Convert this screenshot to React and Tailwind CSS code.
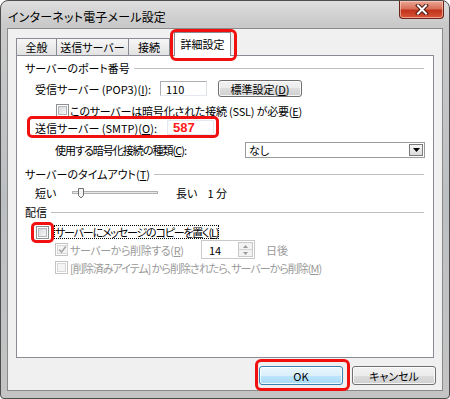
import React from 'react';

const U = ({ children }) => <span className="underline underline-offset-[1px]">{children}</span>;

function Check({ checked = false, disabled = false }) {
  return (
    <span className={disabled ? "w-[13px] h-[13px] shrink-0 border border-[#c4c4c4] bg-white p-[1px] flex" : "w-[13px] h-[13px] shrink-0 border border-[#8e8f8f] bg-white p-[1px] flex"}>
      <span className={disabled ? "flex-1 border border-[#d8d8d8] bg-[#f4f4f4] flex items-center justify-center" : "flex-1 border border-[#b3b6bb] bg-gradient-to-br from-[#d6d9de] to-[#f7f7f7] flex items-center justify-center"}>
        {checked && (
          <svg width="9" height="9" viewBox="0 0 9 9">
            <path d="M1.2 4.6 L3.6 7 L7.8 1.6" fill="none" stroke="#a8a8a8" strokeWidth="1.6" />
          </svg>
        )}
      </span>
    </span>
  );
}

function Btn({ children, def = false, className = "" }) {
  return (
    <div
      className={
        (def
          ? "border-[#3c7fb1] bg-[linear-gradient(#eaf6fd,#d9f0fc_50%,#bee6fd_50%,#a7d9f5)] "
          : "border-[#707070] bg-[linear-gradient(#f2f2f2,#ebebeb_50%,#dddddd_50%,#cfcfcf)] ") +
        "border rounded-[3px] shadow-[inset_0_0_0_1px_rgba(255,255,255,0.8)] flex items-center justify-center " +
        className
      }
    >
      {children}
    </div>
  );
}

function GroupHeader({ children, className = "" }) {
  return (
    <div className={"flex items-center h-[14px] pl-[8px] pr-[9px] " + className}>
      <span className="whitespace-nowrap">{children}</span>
      <div className="flex-1 h-px bg-[#bfbfbf] ml-[4px]" />
    </div>
  );
}

function Slider() {
  return (
    <svg width="86" height="14" viewBox="0 0 86 14" className="shrink-0">
      <rect x="0.5" y="5.5" width="85" height="2" fill="#e7eaea" stroke="#b0b0b0" />
      <path d="M6.5 2.5 H11.5 V9.5 L9 12 L6.5 9.5 Z" fill="#f3f3f3" stroke="#6f6f6f" />
    </svg>
  );
}

export default function App() {
  return (
    <div className="w-[450px] h-[399px] bg-white relative overflow-hidden text-[11px] leading-[14px] text-black [font-family:'Noto_Sans_CJK_JP',sans-serif] [font-feature-settings:'palt']">
      <div className="w-[450px] h-[399px] rounded-t-[8px] rounded-b-[4px] border border-[#4d4d4d] bg-[linear-gradient(180deg,#dedede,#c9c9c9_6%,#bcbfc2_50%,#c4c4c4)] flex flex-col">
        {/* Title bar */}
        <div className="h-[27px] flex items-start justify-between pl-[7px] pr-[5px] shrink-0">
          <span className="text-[12px] leading-[13px] mt-[9px] whitespace-nowrap tracking-[0.2px]">インターネット電子メール設定</span>
          <div className="w-[45px] h-[18px] rounded-b-[4px] border border-t-0 border-[#6a2418] bg-[linear-gradient(#e9a997,#d96e58_45%,#c1341c_55%,#d9553a)] shadow-[inset_0_0_0_1px_rgba(255,210,200,0.6)] flex items-center justify-center">
            <svg width="14" height="11" viewBox="0 0 14 11">
              <path d="M3 1.5 L11 9.5 M11 1.5 L3 9.5" stroke="#4a1a12" strokeWidth="4" strokeLinecap="square" />
              <path d="M3 1.5 L11 9.5 M11 1.5 L3 9.5" stroke="#ffffff" strokeWidth="2" strokeLinecap="square" />
            </svg>
          </div>
        </div>

        {/* Client area */}
        <div className="flex-1 mx-[6px] mb-[7px] border border-[#8a8a8a] bg-[#f0f0f0] flex flex-col">
          {/* Tabs */}
          <div className="flex items-end h-[26px] pl-[8px] shrink-0">
            <div className="w-[41px] h-[17px] border border-b-0 border-[#898c95] bg-gradient-to-b from-[#f7f7f7] to-[#e2e2e2] flex items-center justify-center">全般</div>
            <div className="w-[73px] h-[17px] -ml-px border border-b-0 border-[#898c95] bg-gradient-to-b from-[#f7f7f7] to-[#e2e2e2] flex items-center justify-center">送信サーバー</div>
            <div className="w-[42px] h-[17px] -ml-px border border-b-0 border-[#898c95] bg-gradient-to-b from-[#f7f7f7] to-[#e2e2e2] flex items-center justify-center">接続</div>
            <div className="relative z-10 w-[57px] h-[24px] -mb-px ml-[4px] border border-b-0 border-[#898c95] bg-white flex items-start justify-center pt-[4px]">詳細設定</div>
          </div>

          {/* Panel */}
          <div className="h-[303px] ml-[8px] mr-[8px] border border-[#898c95] bg-white flex flex-col pt-[5px] shrink-0">
            <GroupHeader>サーバーのポート番号</GroupHeader>

            <div className="flex items-center h-[17px] mt-[5px] pl-[18px]">
              <span className="w-[125px] whitespace-nowrap">受信サーバー (POP3)(<U>I</U>):</span>
              <div className="w-[47px] h-[15px] border border-[#abadb3] border-b-[#e3e9ef] border-r-[#dbdfe6] bg-white flex items-center pl-[5px]">110</div>
              <Btn className="ml-[11px] w-[84px] h-[17px]">標準設定(<U>D</U>)</Btn>
            </div>

            <div className="flex items-center h-[13px] mt-[7px] pl-[39px]">
              <Check />
              <span className="ml-[1px] whitespace-nowrap tracking-[-0.2px]">このサーバーは暗号化された接続 (SSL) が必要(<U>E</U>)</span>
            </div>

            <div className="flex items-center h-[15px] mt-[3px] pl-[18px]">
              <span className="w-[132px] whitespace-nowrap">送信サーバー (SMTP)(<U>O</U>):</span>
              <div className="w-[47px] h-[15px] border border-[#e3e9ef] bg-white flex items-center pl-[5px] text-[#ff1a1a] font-bold text-[13px] [font-family:'Liberation_Sans',sans-serif]">587</div>
            </div>

            <div className="flex items-center h-[16px] mt-[7px] pl-[38px]">
              <span className="w-[190px] whitespace-nowrap tracking-[-1px]">使用する暗号化接続の種類(<U>C</U>):</span>
              <div className="w-[180px] h-[16px] border border-[#9a9a9a] bg-white flex items-center pl-[3px] pr-[1px]">
                <span className="flex-1">なし</span>
                <div className="w-[14px] h-[12px] border border-[#7a7a7a] bg-gradient-to-b from-[#f6f6f6] to-[#dcdcdc] flex items-center justify-center">
                  <svg width="7" height="4" viewBox="0 0 7 4"><path d="M0 0 H7 L3.5 4 Z" fill="#000" /></svg>
                </div>
              </div>
            </div>

            <GroupHeader className="mt-[9px]">サーバーのタイムアウト(<U>T</U>)</GroupHeader>

            <div className="flex items-center h-[14px] mt-[5px] pl-[18px]">
              <span className="w-[37px]">短い</span>
              <Slider />
              <span className="ml-[18px]">長い</span>
              <span className="ml-[10px]">1 分</span>
            </div>

            <GroupHeader className="mt-[5px]">配信</GroupHeader>

            <div className="flex items-center h-[14px] mt-[6px] pl-[19px]">
              <Check />
              <span className="ml-[5px] border border-dotted border-black leading-[12px] whitespace-nowrap tracking-[-1.2px]">サーバーにメッセージのコピーを置く(<U>L</U>)</span>
            </div>

            <div className="flex items-center h-[19px] mt-[1px] pl-[38px] text-[#9a9a9a]">
              <Check checked disabled />
              <span className="ml-[2px] w-[131px] whitespace-nowrap tracking-[-0.4px]">サーバーから削除する(<U>R</U>)</span>
              <div className="w-[54px] h-[19px] border border-[#c9c9c9] bg-white flex items-center pl-[7px] pr-[1px] text-black">
                <span className="flex-1">14</span>
                <div className="w-[15px] h-[15px] flex flex-col border border-[#c9c9c9]">
                  <div className="flex-1 border-b border-[#d4d4d4] bg-[#f2f2f2] flex items-center justify-center">
                    <svg width="5" height="3" viewBox="0 0 5 3"><path d="M0 3 H5 L2.5 0 Z" fill="#9a9a9a" /></svg>
                  </div>
                  <div className="flex-1 bg-[#f2f2f2] flex items-center justify-center">
                    <svg width="5" height="3" viewBox="0 0 5 3"><path d="M0 0 H5 L2.5 3 Z" fill="#9a9a9a" /></svg>
                  </div>
                </div>
              </div>
              <span className="ml-[11px]">日後</span>
            </div>

            <div className="flex items-center h-[13px] mt-[2px] pl-[38px] text-[#9a9a9a]">
              <Check disabled />
              <span className="ml-[2px] whitespace-nowrap tracking-[-1px]">[削除済みアイテム] から削除されたら、サーバーから削除(<U>M</U>)</span>
            </div>
          </div>

          {/* Buttons */}
          <div className="flex justify-end gap-[9px] mt-[8px] pr-[6px]">
            <Btn def className="w-[84px] h-[19px]">OK</Btn>
            <Btn className="w-[84px] h-[19px]">キャンセル</Btn>
          </div>
        </div>
      </div>

      {/* Red annotation outlines */}
      <div className="absolute left-[170px] top-[29px] w-[67px] h-[32px] border-[3px] border-[#f01010] rounded-[6px] z-20" />
      <div className="absolute left-[27px] top-[116px] w-[192px] h-[22px] border-[3px] border-[#f01010] rounded-[5px] z-20" />
      <div className="absolute left-[31px] top-[222px] w-[23px] h-[21px] border-[3px] border-[#f01010] rounded-[5px] z-20" />
      <div className="absolute left-[255px] top-[359px] w-[95px] h-[32px] border-[3px] border-[#f01010] rounded-[6px] z-20" />
    </div>
  );
}
